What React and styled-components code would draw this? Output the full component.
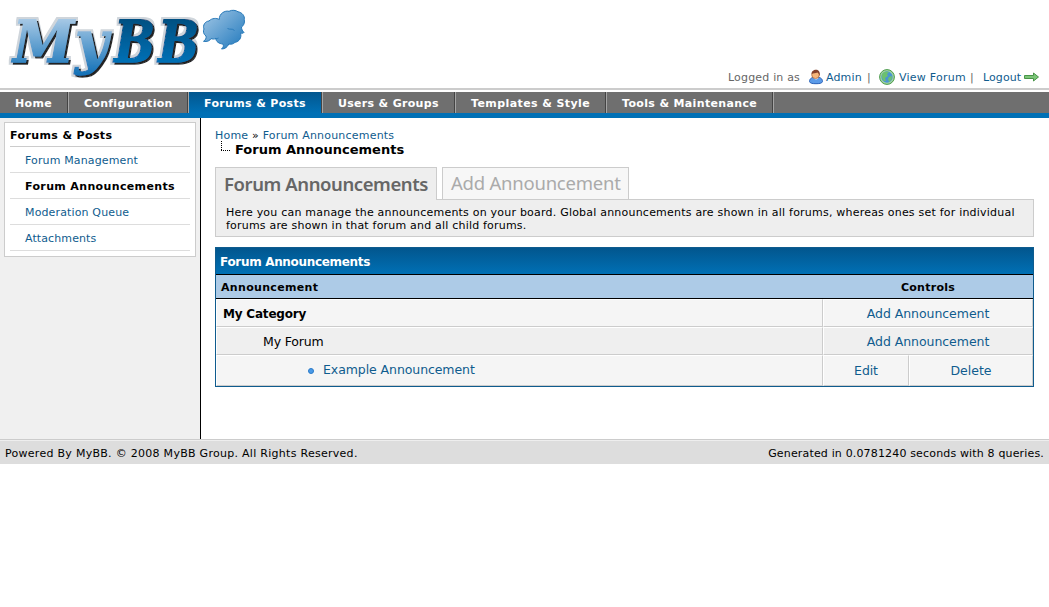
import React from "react";
import styled, { createGlobalStyle, css } from "styled-components";

const Global = createGlobalStyle`
  * { box-sizing: border-box; }
  body {
    margin: 0;
    background: #fff;
    color: #000;
    font-family: Verdana, "DejaVu Sans", sans-serif;
    font-size: 11px;
    line-height: 13px;
  }
`;

const Txt = styled.span`
  white-space: nowrap;
  letter-spacing: ${(p) => p.$ls || 0}px;
`;
const Link = styled.a`
  color: #0f5c8e;
  text-decoration: none;
  white-space: nowrap;
  letter-spacing: ${(p) => p.$ls || 0}px;
`;

const Header = styled.header`
  display: flex;
  justify-content: space-between;
  align-items: flex-end;
  height: 90px;
  border-bottom: 2px solid #ccc;
`;
const LogoArt = styled.svg`
  display: block;
  width: 260px;
  height: 88px;
`;
const Welcome = styled.div`
  display: flex;
  align-items: center;
  height: 16px;
  margin: 0 10px 3px 0;
  color: #666;
`;
const Part = styled.div`
  display: flex;
  flex: none;
  align-items: center;
  gap: ${(p) => p.$gap || 0}px;
  width: ${(p) => p.$w}px;
  svg { display: block; flex: none; }
`;
const Bar = styled(Part)`
  position: relative;
  left: -1px;
`;
const Menu = styled.nav`
  display: flex;
  height: 26px;
  margin-top: 2px;
  background: #6f6f6f;
  border-bottom: 5px solid #0070b5;
`;
const MenuItem = styled.a`
  width: ${(p) => p.$w}px;
  height: 21px;
  padding-left: 15px;
  border-left: ${(p) => (p.$first ? "0" : "1px solid #a5a5a5")};
  border-right: 1px solid #444;
  background: ${(p) => (p.$active ? "linear-gradient(#02568e, #0070b5)" : "transparent")};
  color: #fff;
  font-weight: bold;
  line-height: 23px;
  white-space: nowrap;
  letter-spacing: ${(p) => p.$ls || 0.35}px;
`;
const MenuEnd = styled.span`
  width: 1px;
  height: 21px;
  background: #a5a5a5;
`;

const Main = styled.main`
  display: flex;
  height: 321px;
`;
const Side = styled.aside`
  width: 201px;
  padding: 4px;
  background: #f0f0f0;
  border-right: 1px solid #000;
`;
const SideBox = styled.div`
  width: 192px;
  height: 135px;
  padding: 0 5px;
  border: 1px solid #ccc;
  background: #fff;
`;
const SideTitle = styled.div`
  height: 24px;
  padding-top: 6px;
  border-bottom: 1px solid #ccc;
  font-weight: bold;
`;
const SideItem = styled.div`
  height: 26px;
  padding: 7px 0 0 15px;
  border-bottom: 1px solid #ddd;
  font-weight: ${(p) => (p.$on ? "bold" : "normal")};
`;
const Page = styled.section`
  width: 833px;
  padding: 11px 0 0 14px;
`;
const Crumbs = styled.div`
  height: 12px;
  letter-spacing: 0.2px;
  white-space: nowrap;
`;
const Current = styled.div`
  display: flex;
  height: 26px;
  font-size: 13px;
  font-weight: bold;
  line-height: 18px;
  svg { display: block; margin: 0 5px 0 6px; }
`;
const Tabs = styled.div`
  display: flex;
  gap: 5px;
  height: 32px;
`;
const Tab = styled.a`
  width: ${(p) => p.$w}px;
  height: ${(p) => (p.$active ? 33 : 32)}px;
  padding-left: 8px;
  border: 1px solid #ccc;
  border-bottom: 0;
  background: ${(p) => (p.$active ? "#eee" : "#f7f7f7")};
  color: ${(p) => (p.$active ? "#666" : "#aaa")};
  font: ${(p) => (p.$active ? "600 18.5px/32px" : "400 18.5px/30px")} "Noto Sans", "Open Sans", sans-serif;
  letter-spacing: ${(p) => p.$ls || 0}px;
  white-space: nowrap;
  ${(p) => p.$active && css`
    position: relative;
    z-index: 1;
  `}
`;
const Desc = styled.div`
  display: flex;
  flex-direction: column;
  height: 38px;
  margin-bottom: 10px;
  padding: 6px 10px;
  border: 1px solid #ccc;
  background: #eee;
`;
const Table = styled.div`
  width: 819px;
  height: 140px;
  border: 1px solid #0f5c8e;
`;
const TableTitle = styled.div`
  height: 27px;
  padding-left: 4px;
  border-bottom: 1px solid #000;
  background: linear-gradient(#02568e, #0070b5);
  color: #fff;
  font-size: 12px;
  font-weight: bold;
  line-height: 28px;
`;
const TableHead = styled.div`
  display: flex;
  height: 24px;
  border-bottom: 1px solid #000;
  background: #adcbe7;
  font-weight: bold;
  line-height: 25px;
`;
const HeadCell = styled.div`
  width: ${(p) => p.$w}px;
  padding-left: ${(p) => (p.$center ? 0 : 5)}px;
  text-align: ${(p) => (p.$center ? "center" : "left")};
`;
const Row = styled.div`
  display: flex;
  height: ${(p) => p.$h}px;
  font-size: 12.5px;
`;
const Cell = styled.div`
  display: flex;
  width: ${(p) => p.$w}px;
  padding-left: ${(p) => p.$indent || 0}px;
  justify-content: ${(p) => (p.$center ? "center" : "flex-start")};
  border: 1px solid;
  border-color: #fff #ccc #ccc #fff;
  background: ${(p) => (p.$alt ? "#efefef" : "#f5f5f5")};
  font-size: ${(p) => (p.$bold ? "12px" : "inherit")};
  font-weight: ${(p) => (p.$bold ? "bold" : "normal")};
  line-height: ${(p) => p.$lh || 28}px;
`;
const Bullet = styled.span`
  width: 6px;
  height: 6px;
  margin: 12px 9px 0 0;
  border: 1px solid #2a7ac8;
  border-radius: 50%;
  background: #4a9ae8;
`;
const Footer = styled.footer`
  display: flex;
  justify-content: space-between;
  height: 25px;
  padding: 7px 5px 0 5px;
  border-top: 1px solid #ccc;
  background: #ddd;
  box-shadow: inset 0 1px #eee;
`;

const letters = [
  { ch: "M", x: 13, w: 61, fill: "url(#pale)" },
  { ch: "y", x: 75, w: 33, fill: "url(#pale)" },
  { ch: "B", x: 114, w: 41, fill: "url(#deep)" },
  { ch: "B", x: 158, w: 41, fill: "url(#deep)" },
];

function Logo() {
  return (
    <LogoArt viewBox="0 0 260 88">
      <defs>
        <linearGradient id="pale" gradientUnits="userSpaceOnUse" x1="0" y1="18" x2="0" y2="76">
          <stop offset="0" stopColor="#a9cae6" />
          <stop offset="1" stopColor="#0f6fb6" />
        </linearGradient>
        <linearGradient id="deep" gradientUnits="userSpaceOnUse" x1="0" y1="18" x2="0" y2="62">
          <stop offset="0" stopColor="#044f80" />
          <stop offset="1" stopColor="#0070b5" />
        </linearGradient>
        <linearGradient id="cloud" x1="0" y1="0" x2="1" y2="1">
          <stop offset="0" stopColor="#a4c8e6" />
          <stop offset="1" stopColor="#1f78bc" />
        </linearGradient>
        <filter id="bevel" filterUnits="userSpaceOnUse" x="0" y="0" width="260" height="88">
          <feMorphology in="SourceAlpha" operator="dilate" radius="1.5" result="wide" />
          <feGaussianBlur in="wide" stdDeviation="0.5" result="edge" />
          <feFlood floodColor="#cfd5db" />
          <feComposite in2="edge" operator="in" result="rim" />
          <feOffset in="SourceAlpha" dx="1.5" dy="1.5" result="moved" />
          <feGaussianBlur in="moved" stdDeviation="0.6" result="dark" />
          <feFlood floodColor="#222" />
          <feComposite in2="dark" operator="in" result="shade" />
          <feMerge>
            <feMergeNode in="rim" />
            <feMergeNode in="shade" />
            <feMergeNode in="SourceGraphic" />
          </feMerge>
        </filter>
      </defs>
      <g fontFamily='"DejaVu Serif", serif' fontWeight="bold" fontStyle="italic" fontSize="57" filter="url(#bevel)" colorInterpolationFilters="sRGB">
        {letters.map((l) => (
          <text key={l.x} x={l.x} y="61.500" textLength={l.w} lengthAdjust="spacingAndGlyphs" fill={l.fill} stroke={l.fill} strokeWidth="1.300">{l.ch}</text>
        ))}
      </g>
      <path d="M219.300 19.500C219 13.500 225 10.200 229 11.300C232 9.600 236 10.200 238 11.800C242 12.300 245 16 244.300 19.500C245 23 243.500 25.800 241.500 27C241.500 29.500 242.500 31 244 32.300C243.300 33.500 242 33.500 240.500 33.200C242 37.500 239 42 235 42.300C233.500 44 231 44.600 228.800 44C227.500 47 225 49 221.500 49C223.300 47.500 223.800 46 223 44C219 43.800 215.800 41.500 215.800 38.300C214.500 39.300 212.500 39.300 211 38.500C210 40.800 207 42 203.500 41.300C205.500 40 206.500 38.300 206 36C203.500 34.500 202.800 31 204 29C202.500 25.500 205 21.300 209 21C212 18 216.500 17.800 219.300 19.500Z" fill="url(#cloud)" stroke="#2678b8" strokeWidth="1" strokeLinejoin="round" />
      <path d="M227.500 28.500C230 30 232 28 234.500 30.500M215 38.500C216 39 217.500 38.500 218.500 38" fill="none" stroke="#2678b8" strokeWidth=".9" />
    </LogoArt>
  );
}

const UserIcon = () => (
  <svg width="16" height="16" viewBox="0 0 16 16">
    <path d="M1.500 12.500C1.500 9.500 4 8 8 8S14.500 9.500 14.500 12.500C14 14.500 11 14.700 8 14.700S2 14.500 1.500 12.500Z" fill="#5b9be8" stroke="#2a62b8" />
    <path d="M5.500 8.500C6.500 11 9.500 11 10.500 8.500Z" fill="#fff" />
    <ellipse cx="7.500" cy="5.800" rx="3.800" ry="3.800" fill="#f6b67a" stroke="#a05a32" strokeWidth=".7" />
    <path d="M3.600 5C3.400 2.500 5.500 .8 8 .8C11 .8 12.200 3 11.800 7.500C11.200 6 11 4.500 9.500 3.600C7.500 4.600 5 4.200 3.600 5Z" fill="#84402a" />
  </svg>
);
const GlobeIcon = () => (
  <svg width="16" height="16" viewBox="0 0 16 16">
    <circle cx="8" cy="8" r="7.400" fill="#a5d6a0" stroke="#4a9a4c" />
    <circle cx="8" cy="8" r="5.700" fill="#4a94d2" />
    <path d="M3 5C5 2 8 2 10 3L8 5L9 7L6 9L7 12L5 12C3 10 2.500 8 3 5ZM10 8L13 7C13 10 12 12 10 13L9 10Z" fill="#6cc070" />
  </svg>
);
const ArrowIcon = () => (
  <svg width="15" height="10" viewBox="0 0 15 10">
    <path d="M.5 3.500H9.500V1L14.500 5L9.500 9V6.500H.5Z" fill="#7cc578" stroke="#3c8c3c" strokeWidth=".9" />
  </svg>
);

export default function App() {
  return (
    <>
      <Global />
      <Header>
        <Logo />
        <Welcome>
          <Part $w={80}><Txt $ls={0.18}>Logged in as</Txt></Part>
          <Part $w={60} $gap={2}><UserIcon /><Link $ls={0.15}>Admin</Link></Part>
          <Bar $w={11}>|</Bar>
          <Part $w={92} $gap={4}><GlobeIcon /><Link $ls={0.25}>View Forum</Link></Part>
          <Bar $w={12}>|</Bar>
          <Part $w={56} $gap={3}><Link $ls={0.1}>Logout</Link><ArrowIcon /></Part>
        </Welcome>
      </Header>
      <Menu>
        <MenuItem $w={68} $first>Home</MenuItem>
        <MenuItem $w={120} $ls={0.28}>Configuration</MenuItem>
        <MenuItem $w={134} $active>Forums &amp; Posts</MenuItem>
        <MenuItem $w={133} $ls={0.31}>Users &amp; Groups</MenuItem>
        <MenuItem $w={151} $ls={0.41}>Templates &amp; Style</MenuItem>
        <MenuItem $w={167}>Tools &amp; Maintenance</MenuItem>
        <MenuEnd />
      </Menu>
      <Main>
        <Side>
          <SideBox>
            <SideTitle><Txt $ls={0.38}>Forums &amp; Posts</Txt></SideTitle>
            <SideItem><Link $ls={0.14}>Forum Management</Link></SideItem>
            <SideItem $on><Txt $ls={0.36}>Forum Announcements</Txt></SideItem>
            <SideItem><Link $ls={0.14}>Moderation Queue</Link></SideItem>
            <SideItem><Link $ls={0.1}>Attachments</Link></SideItem>
          </SideBox>
        </Side>
        <Page>
          <Crumbs><Link $ls={0.2}>Home</Link> » <Link $ls={0.2}>Forum Announcements</Link></Crumbs>
          <Current>
            <svg width="9" height="10" viewBox="0 0 9 10">
              <path d="M.5 0V10M0 9.500H9" fill="none" stroke="#000" strokeDasharray="1 1" />
            </svg>
            <Txt>Forum Announcements</Txt>
          </Current>
          <Tabs>
            <Tab $w={222} $ls={-0.42} $active>Forum Announcements</Tab>
            <Tab $w={187} $ls={-0.23}>Add Announcement</Tab>
          </Tabs>
          <Desc>
            <Txt $ls={0.213}>Here you can manage the announcements on your board. Global announcements are shown in all forums, whereas ones set for individual</Txt>
            <Txt $ls={0.2}>forums are shown in that forum and all child forums.</Txt>
          </Desc>
          <Table>
            <TableTitle><Txt $ls={-0.32}>Forum Announcements</Txt></TableTitle>
            <TableHead>
              <HeadCell $w={607}><Txt $ls={0.33}>Announcement</Txt></HeadCell>
              <HeadCell $w={210} $center><Txt $ls={0.25}>Controls</Txt></HeadCell>
            </TableHead>
            <Row $h={28}>
              <Cell $w={607} $indent={6} $bold><Txt $ls={-0.2}>My Category</Txt></Cell>
              <Cell $w={210} $center><Link $ls={-0.05}>Add Announcement</Link></Cell>
            </Row>
            <Row $h={28}>
              <Cell $w={607} $indent={46} $alt><Txt $ls={-0.15}>My Forum</Txt></Cell>
              <Cell $w={210} $center $alt><Link $ls={-0.05}>Add Announcement</Link></Cell>
            </Row>
            <Row $h={31}>
              <Cell $w={607} $indent={91}><Bullet /><Link $ls={-0.08}>Example Announcement</Link></Cell>
              <Cell $w={86} $lh={30} $center><Link $ls={-0.1}>Edit</Link></Cell>
              <Cell $w={124} $lh={30} $center><Link>Delete</Link></Cell>
            </Row>
          </Table>
        </Page>
      </Main>
      <Footer>
        <Txt $ls={0.28}>Powered By MyBB. © 2008 MyBB Group. All Rights Reserved.</Txt>
        <Txt $ls={0.16}>Generated in 0.0781240 seconds with 8 queries.</Txt>
      </Footer>
    </>
  );
}
